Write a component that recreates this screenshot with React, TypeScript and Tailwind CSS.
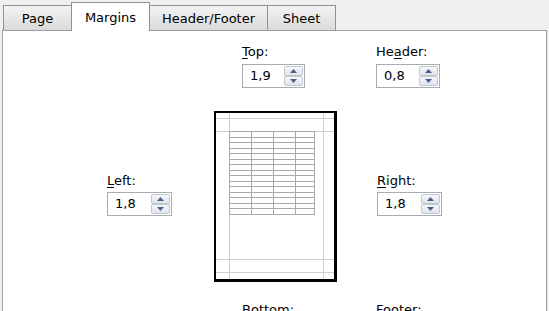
import React from "react";

const font = { fontFamily: '"DejaVu Sans", Verdana, sans-serif' };

function Label({ text, ul }: { text: string; ul: number }) {
  return (
    <div className="h-[16px] leading-[16px] text-[13px] text-black whitespace-nowrap">
      {text.slice(0, ul)}
      <span className="underline underline-offset-2">{text[ul]}</span>
      {text.slice(ul + 1)}
    </div>
  );
}

function Arrow({ up }: { up: boolean }) {
  return (
    <svg width="7" height="4" viewBox="0 0 7 4" className="block">
      {up ? (
        <polygon points="0,4 7,4 3.5,0" fill="#4a5f8c" />
      ) : (
        <polygon points="0,0 7,0 3.5,4" fill="#4a5f8c" />
      )}
    </svg>
  );
}

function Spinner({ value, w = 63 }: { value: string; w?: number }) {
  return (
    <div
      className="flex h-[24px] border border-[#a9acb2] bg-white"
      style={{ width: w }}
    >
      <div className="flex-1 pl-[7px] text-[13px] leading-[22px] text-black">{value}</div>
      <div className="flex flex-col w-[19px] my-[1px] mr-[1px]">
        <div className="flex-1 flex items-center justify-center border border-[#c3c7cf] rounded-[2px] bg-gradient-to-b from-[#f7f8fa] to-[#dfe3ea]">
          <Arrow up />
        </div>
        <div className="flex-1 flex items-center justify-center border border-[#c3c7cf] rounded-[2px] bg-gradient-to-b from-[#f7f8fa] to-[#dfe3ea]">
          <Arrow up={false} />
        </div>
      </div>
    </div>
  );
}

function PagePreview() {
  const rows = Array.from({ length: 16 }, (_, i) => 21 + Math.round(i * 5.53));
  return (
    <svg width="127" height="174" viewBox="0 0 127 174" shapeRendering="crispEdges" className="block">
      <rect x="1" y="1" width="123" height="171" fill="#000" />
      <rect x="3" y="3" width="118" height="166" fill="#fff" />
      {[16, 110].map((x) => (
        <rect key={"v" + x} x={x} y="3" width="1" height="166" fill="#cfcfcf" />
      ))}
      {[8, 21, 149, 162].map((y) => (
        <rect key={"h" + y} x="3" y={y} width="118" height="1" fill="#cfcfcf" />
      ))}
      {rows.map((y) => (
        <rect key={"r" + y} x="16" y={y} width="86" height="1" fill="#a8a8a8" />
      ))}
      {[16, 38, 60, 82, 101].map((x) => (
        <rect key={"c" + x} x={x} y="21" width="1" height="84" fill="#a8a8a8" />
      ))}
    </svg>
  );
}

export default function App() {
  return (
    <div className="w-[549px] h-[311px] overflow-hidden bg-[#f0f0f0] flex flex-col" style={font}>
      {/* Tabs */}
      <div className="flex items-end h-[30px] pl-[3px] pt-[2px] text-[13px] text-black">
        <div className="w-[69px] h-[25px] border border-b-0 border-[#8d9097] bg-gradient-to-b from-[#f4f4f4] to-[#dadada] flex items-center justify-center pt-[1px]">
          Page
        </div>
        <div className="relative z-10 -ml-px w-[79px] h-[29px] -mb-px border border-b-0 border-[#8d9097] bg-white flex items-start justify-center pt-[5px]">
          Margins
        </div>
        <div className="-ml-px w-[119px] h-[25px] border border-b-0 border-[#8d9097] bg-gradient-to-b from-[#f4f4f4] to-[#dadada] flex items-center justify-center pt-[1px]">
          Header/Footer
        </div>
        <div className="-ml-px w-[69px] h-[25px] border border-b-0 border-[#8d9097] bg-gradient-to-b from-[#f4f4f4] to-[#dadada] flex items-center justify-center pt-[1px]">
          Sheet
        </div>
      </div>
      {/* Panel */}
      <div className="flex-1 mx-[2px] border border-b-0 border-[#9a9da3] bg-white">
        <div className="flex mt-[13px]">
          <div className="ml-[239px] flex flex-col gap-[4px]">
            <Label text="Top:" ul={0} />
            <Spinner value="1,9" />
          </div>
          <div className="ml-[71px] flex flex-col gap-[4px]">
            <Label text="Header:" ul={2} />
            <Spinner value="0,8" w={64} />
          </div>
        </div>
        <div className="flex mt-[23px]">
          <div className="ml-[104px] mt-[62px] flex flex-col gap-[3px]">
            <Label text="Left:" ul={0} />
            <Spinner value="1,8" w={65} />
          </div>
          <div className="ml-[41px] -mt-[1px]">
            <PagePreview />
          </div>
          <div className="ml-[37px] mt-[62px] flex flex-col gap-[3px]">
            <Label text="Right:" ul={0} />
            <Spinner value="1,8" w={65} />
          </div>
        </div>
        <div className="flex mt-[18px]">
          <div className="ml-[239px]">
            <Label text="Bottom:" ul={0} />
          </div>
          <div className="ml-[82px]">
            <Label text="Footer:" ul={0} />
          </div>
        </div>
      </div>
    </div>
  );
}
